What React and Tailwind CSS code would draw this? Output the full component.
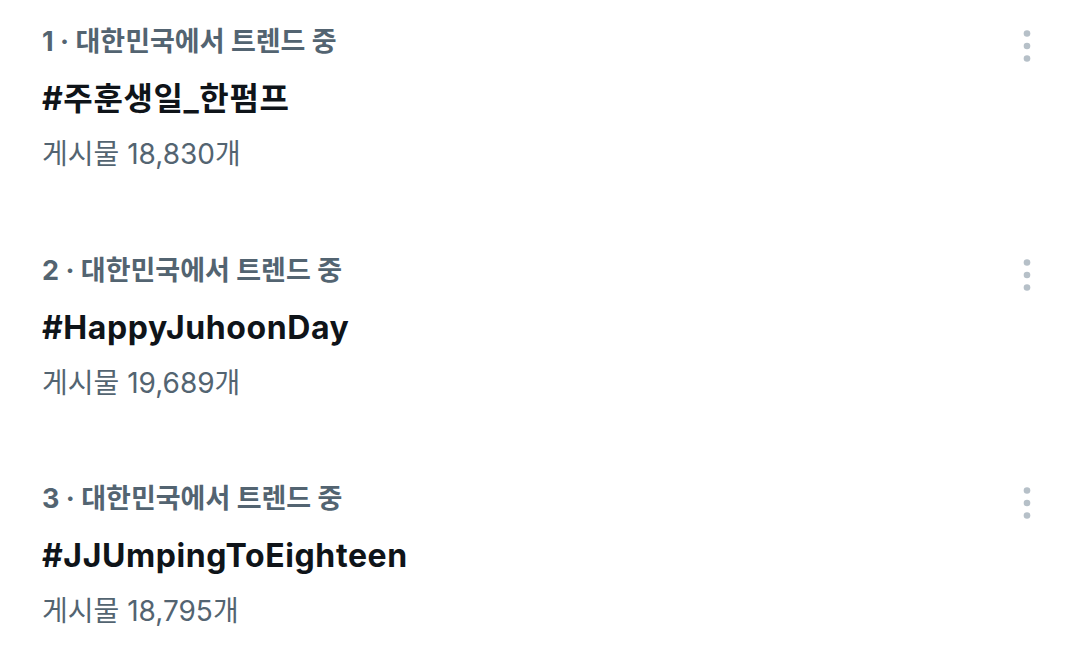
const trends = [
  { rank: 1, name: "#주훈생일_한펌프", posts: "18,830" },
  { rank: 2, name: "#HappyJuhoonDay", posts: "19,689" },
  { rank: 3, name: "#JJUmpingToEighteen", posts: "18,795" },
]

function MoreIcon() {
  return (
    <svg width="10" height="36" viewBox="0 0 10 36" className="shrink-0">
      <circle cx="5" cy="5.5" r="3.3" fill="#b6c0c8" />
      <circle cx="5" cy="18" r="3.3" fill="#b6c0c8" />
      <circle cx="5" cy="30.5" r="3.3" fill="#b6c0c8" />
    </svg>
  )
}

export default function App() {
  return (
    <div
      className="w-[1080px] h-[657px] bg-white overflow-hidden pt-[24px]"
      style={{ fontFamily: "Inter, 'Noto Sans CJK KR', sans-serif" }}
    >
      {trends.map((t) => (
        <div key={t.rank} className="flex justify-between pl-[42px] pr-[48px] h-[228.5px]">
          <div className="flex flex-col">
            <p className="text-[27px] leading-[36px] font-bold text-[#536471]">
              {t.rank} · 대한민국에서 트렌드 중
            </p>
            <p className="mt-[21px] text-[32px] leading-[36px] font-bold tracking-[0.6px] text-[#0f1419]">
              {t.name}
            </p>
            <p className="mt-[19px] text-[28px] leading-[36px] text-[#536471]">
              게시물 {t.posts}개
            </p>
          </div>
          <div className="pt-[4px]">
            <MoreIcon />
          </div>
        </div>
      ))}
    </div>
  )
}
